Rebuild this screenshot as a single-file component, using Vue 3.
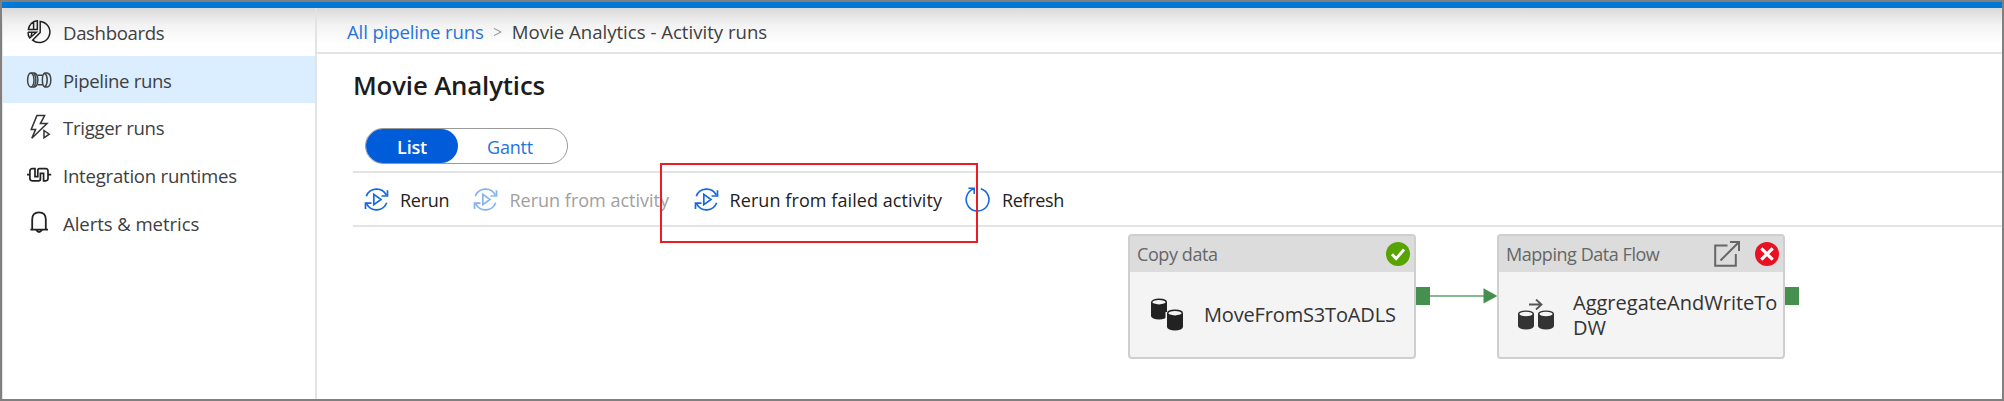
<script setup>
const nav = [
  { id: 'dash', label: 'Dashboards' },
  { id: 'pipe', label: 'Pipeline runs', active: true },
  { id: 'trig', label: 'Trigger runs' },
  { id: 'integ', label: 'Integration runtimes' },
  { id: 'bell', label: 'Alerts & metrics' },
]
const actions = [
  { id: 'rerun', label: 'Rerun' },
  { id: 'from', label: 'Rerun from activity', disabled: true },
  { id: 'failed', label: 'Rerun from failed activity' },
  { id: 'refresh', label: 'Refresh', refresh: true },
]
</script>

<template>
  <div class="frame">
    <div class="topbar"></div>
    <div class="body">
      <nav class="side">
        <div v-for="n in nav" :key="n.id" class="item" :class="[n.id, { active: n.active }]">
          <svg class="nico" viewBox="0 0 26 26" fill="none" stroke="#222" stroke-width="1.5">
            <template v-if="n.id === 'dash'">
              <path d="M14.2 2.4A10.6 10.6 0 1 1 6.6 21.2L14.2 13.4Z" />
              <path d="M11.3 1.8V10.4H2.4A9.6 9.6 0 0 1 11.3 1.8ZM7.6 3V10.4M2 13.2H10.4L3.8 19A9 9 0 0 1 2 13.2M6 13.4L4.9 17.6" />
            </template>
            <g v-else-if="n.id === 'pipe'" stroke="#444">
              <ellipse cx="4.8" cy="12" rx="3.2" ry="7" />
              <path d="M4.8 5H8.6Q11.8 6.2 11.8 12Q11.8 17.8 8.6 19H4.8M8 5.4C11 9 10 16 8 18.6" />
              <path d="M11.6 7.2H16.6M11.6 16.8H16.6M18.6 5C15.6 7 15.6 17 18.6 19H21.2C26 18 26 6 21.2 5ZM18.8 5C22 8 22 16 18.8 19" />
            </g>
            <path v-else-if="n.id === 'trig'" stroke="#333" d="M10.9 1.6H18.6L14.4 9.6H21L5.8 24.2L9.6 15.4H5.2ZM18 16.5L23.2 20.2L18 23.8Z" />
            <path v-else-if="n.id === 'integ'" stroke-width="1.7" d="M1 12.7H4M22 12.7H25.2M9 6.7H6.4Q3.9 6.7 3.9 9V16.6Q3.9 18.8 6.2 18.8H12.6Q14.4 18.8 14.4 17V11.4H17.6V18.8H19.8Q22 18.8 22 16.6V9Q22 6.7 19.8 6.7H13.4Q11.8 6.7 11.8 8.4V14.6H9Z" />
            <path v-else stroke-width="1.8" d="M4.4 19.6H22M6.2 19.4V9.6Q6.2 2.4 13 2.4Q19.8 2.4 19.8 9.6V19.4M10.2 20Q13 24 16 20" />
          </svg>
          <span class="t">{{ n.label }}</span>
        </div>
      </nav>
      <main class="main">
        <header class="crumbs">
          <span class="link">All pipeline runs</span>
          <svg class="chev" viewBox="0 0 10 10" fill="none" stroke="#888" stroke-width="1.1"><path d="M1 1L9 5L1 9" /></svg>
          <span class="here">Movie Analytics - Activity runs</span>
        </header>
        <h1>Movie Analytics</h1>
        <div class="toggle">
          <div class="on">List</div>
          <div class="off">Gantt</div>
        </div>
        <div class="toolbar">
          <div v-for="a in actions" :key="a.id" class="act" :class="[a.id, { disabled: a.disabled }]">
            <svg v-if="!a.refresh" class="aico" viewBox="0 0 25 25" fill="none" stroke="#1468e0" stroke-width="1.7">
              <path d="M2.3 9.2A11 11 0 0 1 22.2 7.8M23.5 3.2V9H17.5M22.7 15.8A11 11 0 0 1 2.8 17.2M1.5 22V16.2H7.5M9.8 7.3V17.7L17 12.5Z" />
            </svg>
            <svg v-else class="aico" viewBox="0 0 25 25" fill="none" stroke="#1468e0" stroke-width="1.6">
              <path d="M15.8 1.7A11.4 11.4 0 1 1 9 1.8M3.4 1.2H9.2V7" />
            </svg>
            <span class="t">{{ a.label }}</span>
          </div>
        </div>
      </main>
    </div>

    <div class="node copy">
      <div class="nhead"><span>Copy data</span>
        <svg class="badge" viewBox="0 0 24 24"><circle cx="12" cy="12" r="12" fill="#57a300" /><path d="M6 12.2L10.2 16.7L18 7.5" fill="none" stroke="#fff" stroke-width="2.8" /></svg>
      </div>
      <div class="nbody">
        <svg class="dbs" viewBox="0 0 34 34">
          <path d="M1 4V18A8 3.4 0 0 0 17 18V4Z" fill="#222" /><ellipse cx="9" cy="4.2" rx="7.3" ry="2.9" fill="#f4f4f4" stroke="#222" stroke-width="1.4" />
          <path d="M15.5 14H34V31H15.5Z" fill="#f4f4f4" />
          <path d="M17 15V29A8 3.4 0 0 0 33 29V15Z" fill="#222" /><ellipse cx="25" cy="15.2" rx="7.3" ry="2.9" fill="#f4f4f4" stroke="#222" stroke-width="1.4" />
        </svg>
        <span class="name">MoveFromS3ToADLS</span>
      </div>
    </div>
    <div class="port p1"></div>
    <svg class="wire" viewBox="0 0 67 18"><path d="M0 9H55" stroke="#86b98d" stroke-width="2.2" /><path d="M53.5 1.3L67.3 9L53.5 16.5Z" fill="#46904f" /></svg>
    <div class="node flow">
      <div class="nhead"><span class="mdf">Mapping Data Flow</span>
        <svg class="open" viewBox="0 0 28 28" fill="none" stroke="#666" stroke-width="2"><path d="M14.5 5.5H2.2V25.8H22.8V14M7.5 20.5L25.5 2.5M17 2H26V11" /></svg>
        <svg class="badge" viewBox="0 0 24 24"><circle cx="12" cy="12" r="12" fill="#e81123" /><path d="M6.3 6.3L17.7 17.7M17.7 6.3L6.3 17.7" stroke="#fff" stroke-width="3.2" /></svg>
      </div>
      <div class="nbody">
        <svg class="dbs2" viewBox="0 0 38 32">
          <path d="M12 5.5H24M19 .5L24.5 5.5L19 10.5" fill="none" stroke="#555" stroke-width="1.8" />
          <path d="M1 14.6V27A8 3.4 0 0 0 17 27V14.6Z" fill="#333" /><ellipse cx="9" cy="15" rx="7.3" ry="2.9" fill="#f4f4f4" stroke="#333" stroke-width="1.4" />
          <path d="M21 14.6V27A8 3.4 0 0 0 37 27V14.6Z" fill="#333" /><ellipse cx="29" cy="15" rx="7.3" ry="2.9" fill="#f4f4f4" stroke="#333" stroke-width="1.4" />
        </svg>
        <div class="two">AggregateAndWriteTo<br>DW</div>
      </div>
    </div>
    <div class="port p2"></div>
    <div class="highlight"></div>
  </div>
</template>

<style>
body { margin: 0; background: #fff; }
</style>
<style scoped>
.frame { position: relative; box-sizing: border-box; width: 2004px; height: 401px; border: 2px solid #808080; background: #fff; overflow: hidden; display: flex; flex-direction: column; font-family: "Open Sans", "Noto Sans", sans-serif; font-size: 18.6px; color: #404040; white-space: nowrap; }
.topbar { height: 6px; background: #0078d7; flex: none; }
.body { flex: 1; display: flex; background: linear-gradient(#d9d9d9, #f2f2f2 16px, #fff 36px); }
.side { width: 312px; flex: none; border-left: 1px solid #e3e3e3; border-right: 2px solid #e3e3e3; }
.item { display: flex; align-items: center; height: 47.6px; padding-left: 23px; }
.item .t { position: relative; top: 1px; left: -1px; }
.dash .t { letter-spacing: -.36px; }
.pipe .t { letter-spacing: -.34px; }
.trig .t { letter-spacing: -.3px; }
.integ .t { letter-spacing: -.24px; }
.bell .t { letter-spacing: -.08px; }
.item.active { background: #dbeeff; }
.nico { width: 26px; height: 26px; margin: 1px 12px 0 0; flex: none; }
.pipe .nico { margin-top: 3px; }
.main { flex: 1; display: flex; flex-direction: column; }
.crumbs { height: 46px; border-bottom: 2px solid #e3e3e3; display: flex; align-items: center; padding: 2px 0 0 30px; box-sizing: border-box; }
.link { color: #2672de; letter-spacing: -.14px; }
.here { letter-spacing: 0; }
.chev { width: 9px; height: 10px; margin: 2px 10px 0 9px; }
h1 { margin: 0; height: 74px; line-height: 62px; padding-left: 36px; font-size: 25.8px; font-weight: 600; letter-spacing: -.15px; color: #1c1c1c; }
.toggle { box-sizing: border-box; width: 203px; height: 36px; margin-left: 48px; border: 1.5px solid #999; border-radius: 18px; display: flex; line-height: 36px; text-align: center; }
.on { width: 92px; height: 34px; background: #015cda; border-radius: 18px; color: #fff; font-weight: 600; font-size: 18px; letter-spacing: -.2px; }
.off { flex: 1; color: #2672de; padding-right: 5px; font-size: 18px; letter-spacing: -.2px; }
.toolbar { box-sizing: border-box; height: 56px; margin: 7px 0 0 36px; border-top: 2px solid #e3e3e3; border-bottom: 2px solid #e3e3e3; display: flex; align-items: center; padding-left: 11px; color: #222; font-size: 18px; }
.act { display: flex; align-items: center; gap: 11px; }
.act .t { padding-top: 2px; }
.rerun { width: 108.5px; letter-spacing: -.25px; }
.from { width: 221px; gap: 12px; }
.failed { width: 271.5px; letter-spacing: .08px; }
.refresh { letter-spacing: -.35px; gap: 12px; }
.act.disabled { color: #a0a0a0; }
.disabled .aico { opacity: .5; }
.aico { width: 25px; height: 25px; flex: none; }
.node { position: absolute; box-sizing: border-box; width: 288px; height: 125px; top: 232px; border: 2px solid #cfcfcf; border-radius: 4px; background: #f4f4f4; }
.copy { left: 1126px; }
.flow { left: 1495px; }
.nhead { height: 36px; background: #dcdcdc; display: flex; align-items: center; padding: 0 4px 0 7px; color: #666; font-size: 18px; letter-spacing: -.4px; }
.mdf { letter-spacing: -.45px; }
.badge { width: 24px; height: 24px; margin-left: 14px; }
.copy .badge { margin-left: auto; }
.open { width: 28px; height: 28px; margin-left: auto; }
.nbody { display: flex; height: 85px; align-items: center; color: #333; font-size: 20px; }
.name { letter-spacing: -.16px; }
.dbs { width: 34px; height: 34px; margin: 0 20px; }
.dbs2 { width: 38px; height: 32px; margin: 0 18px; }
.two { line-height: 25px; }
.port { position: absolute; top: 285px; width: 14px; height: 18px; background: #46904f; }
.p1 { left: 1414px; }
.p2 { left: 1783px; }
.wire { position: absolute; left: 1428px; top: 285px; width: 67px; height: 18px; }
.highlight { position: absolute; box-sizing: border-box; left: 658px; top: 161px; width: 318px; height: 80px; border: 2px solid #ed1c24; }
</style>
